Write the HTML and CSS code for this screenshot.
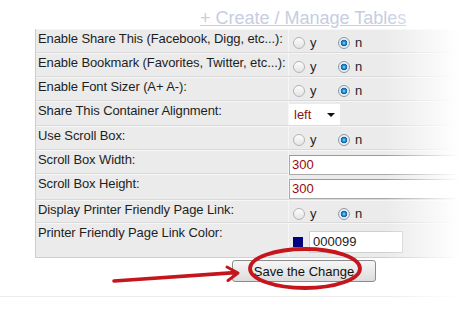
FILE: index.html
```html
<!DOCTYPE html>
<html lang="en">
<head>
  <meta charset="UTF-8">
  <title>Share Options</title>
  <link rel="stylesheet" href="styles.css">
</head>
<body>
  <div class="shot">
    <div class="top"><a href="#" class="manage">+ Create / Manage Tables</a></div>

    <div class="opts">
      <div class="row">
        <div class="lbl">Enable Share This (Facebook, Digg, etc...):</div>
        <div class="val">
          <label class="opt"><input type="radio" name="share"> y</label>
          <label class="opt"><input type="radio" name="share" checked> n</label>
        </div>
      </div>
      <div class="row">
        <div class="lbl">Enable Bookmark (Favorites, Twitter, etc...):</div>
        <div class="val">
          <label class="opt"><input type="radio" name="bookmark"> y</label>
          <label class="opt"><input type="radio" name="bookmark" checked> n</label>
        </div>
      </div>
      <div class="row">
        <div class="lbl">Enable Font Sizer (A+ A-):</div>
        <div class="val">
          <label class="opt"><input type="radio" name="sizer"> y</label>
          <label class="opt"><input type="radio" name="sizer" checked> n</label>
        </div>
      </div>
      <div class="row row-select">
        <div class="lbl">Share This Container Alignment:</div>
        <div class="val val-select">
          <span class="select">left<i class="caret"></i></span>
        </div>
      </div>
      <div class="row">
        <div class="lbl">Use Scroll Box:</div>
        <div class="val">
          <label class="opt"><input type="radio" name="scroll"> y</label>
          <label class="opt"><input type="radio" name="scroll" checked> n</label>
        </div>
      </div>
      <div class="row">
        <div class="lbl">Scroll Box Width:</div>
        <div class="val val-input"><input class="text" type="text" value="300"></div>
      </div>
      <div class="row row-tall">
        <div class="lbl">Scroll Box Height:</div>
        <div class="val val-input"><input class="text" type="text" value="300"></div>
      </div>
      <div class="row row-short">
        <div class="lbl">Display Printer Friendly Page Link:</div>
        <div class="val">
          <label class="opt"><input type="radio" name="printer"> y</label>
          <label class="opt"><input type="radio" name="printer" checked> n</label>
        </div>
      </div>
      <div class="row row-color">
        <div class="lbl">Printer Friendly Page Link Color:</div>
        <div class="val val-color">
          <span class="swatch"></span>
          <input class="color" type="text" value="000099">
        </div>
      </div>
    </div>

    <div class="actions"><button class="save">Save the Change</button></div>
    <div class="foot"></div>

    <div class="fade-right"></div>

    <!-- annotation drawn over the screenshot -->
    <svg class="mark" width="473" height="321" viewBox="0 0 473 321">
      <path d="M114 281 L235 272.6" stroke="#c4161c" stroke-width="3.6" stroke-linecap="round" fill="none"/>
      <path d="M227 267 L238 273 L228 280.5" stroke="#c4161c" stroke-width="3" stroke-linecap="round" stroke-linejoin="round" fill="none"/>
      <ellipse cx="305" cy="268.5" rx="55" ry="19.5" stroke="#c4161c" stroke-width="3.8" fill="none"/>
    </svg>
  </div>
</body>
</html>
```

FILE: styles.css
```css
* { box-sizing: border-box; margin: 0; padding: 0; }
body { width: 473px; height: 321px; overflow: hidden; background: #fff; font-family: "Liberation Sans", Arial, sans-serif; font-size: 13px; color: #1e1e1e; }
.shot { position: relative; width: 473px; height: 321px; overflow: hidden; }

.top { height: 29px; padding: 8px 0 0 200px; }
.manage { display: block; font-size: 18px; line-height: 20px; color: #c5cee2; text-decoration: underline; white-space: nowrap; }

.opts { margin-left: 35px; width: 460px; border-left: 1px solid #cdcdcd; border-bottom: 1px solid #cfcfcf; }
.row { display: grid; grid-template-columns: 253px 1fr; height: 24px; background: #ebebeb; border-top: 1px solid #f6f6f6; border-bottom: 1px solid #d9d9d9; }
.row-select { height: 25px; }
.row-tall { height: 26px; }
.row-short { height: 23px; }
.row-color { height: 34px; border-bottom: none; }
.lbl { padding: 1px 0 0 2px; line-height: 16px; letter-spacing: -0.1px; white-space: nowrap; border-right: 1px solid #f6f6f6; }
.val { display: flex; align-items: center; align-self: start; height: 21px; padding: 5px 0 0 4px; line-height: 16px; }

.opt { display: inline-flex; align-items: center; width: 45px; }
.opt input { appearance: none; width: 12px; height: 12px; margin-right: 5px; border: 1px solid #b4b4b4; border-radius: 50%; background: linear-gradient(#fdfdfd, #e4e4e4); }
.opt input:checked { border-color: #8d9aa8; background: radial-gradient(circle, #8fd6ff 0, #2a93d8 1.6px, #125e9c 3px, #e9eef2 3.6px, #e9eef2 100%); }

.val-select { padding: 2px 0 0 0; height: 23px; }
.select { display: flex; align-items: center; justify-content: space-between; width: 51px; height: 21px; padding: 0 5px; background: #fff; color: #8e1212; line-height: 21px; }
.caret { width: 0; height: 0; border-left: 4px solid transparent; border-right: 4px solid transparent; border-top: 4px solid #111; margin-top: 1px; }

.val-input { padding: 3px 0 0 0; height: 24px; }
.text { width: 200px; height: 20px; padding: 0 2px; border: 1px solid #a9a9a9; border-top-color: #9a9a9a; background: #fff; color: #990b0b; font: 13px "Liberation Sans", Arial, sans-serif; outline: none; }

.val-color { padding: 6px 0 0 4px; height: 29px; }
.swatch { width: 10px; height: 10px; background: #000080; margin-right: 6px; }
.color { width: 94px; height: 22px; padding: 0 3px; border: 1px solid #d0d0d0; background: #fff; color: #1d1d1d; font: 13px "Liberation Sans", Arial, sans-serif; outline: none; }

.actions { padding: 2px 0 0 232px; }
.save { width: 144px; height: 22px; border: 1px solid #8c8c8c; border-radius: 3px; background: linear-gradient(#f6f6f6, #e9e9e9 50%, #dcdcdc); color: #111; font: 13px "Liberation Sans", Arial, sans-serif; }
.foot { margin-top: 14px; border-top: 1px solid #ececec; }

.fade-right { position: absolute; top: 0; left: 385px; width: 88px; height: 321px; background: linear-gradient(to right, rgba(255,255,255,0), #fff 85%); }
.mark { position: absolute; left: 0; top: 0; pointer-events: none; }
```
